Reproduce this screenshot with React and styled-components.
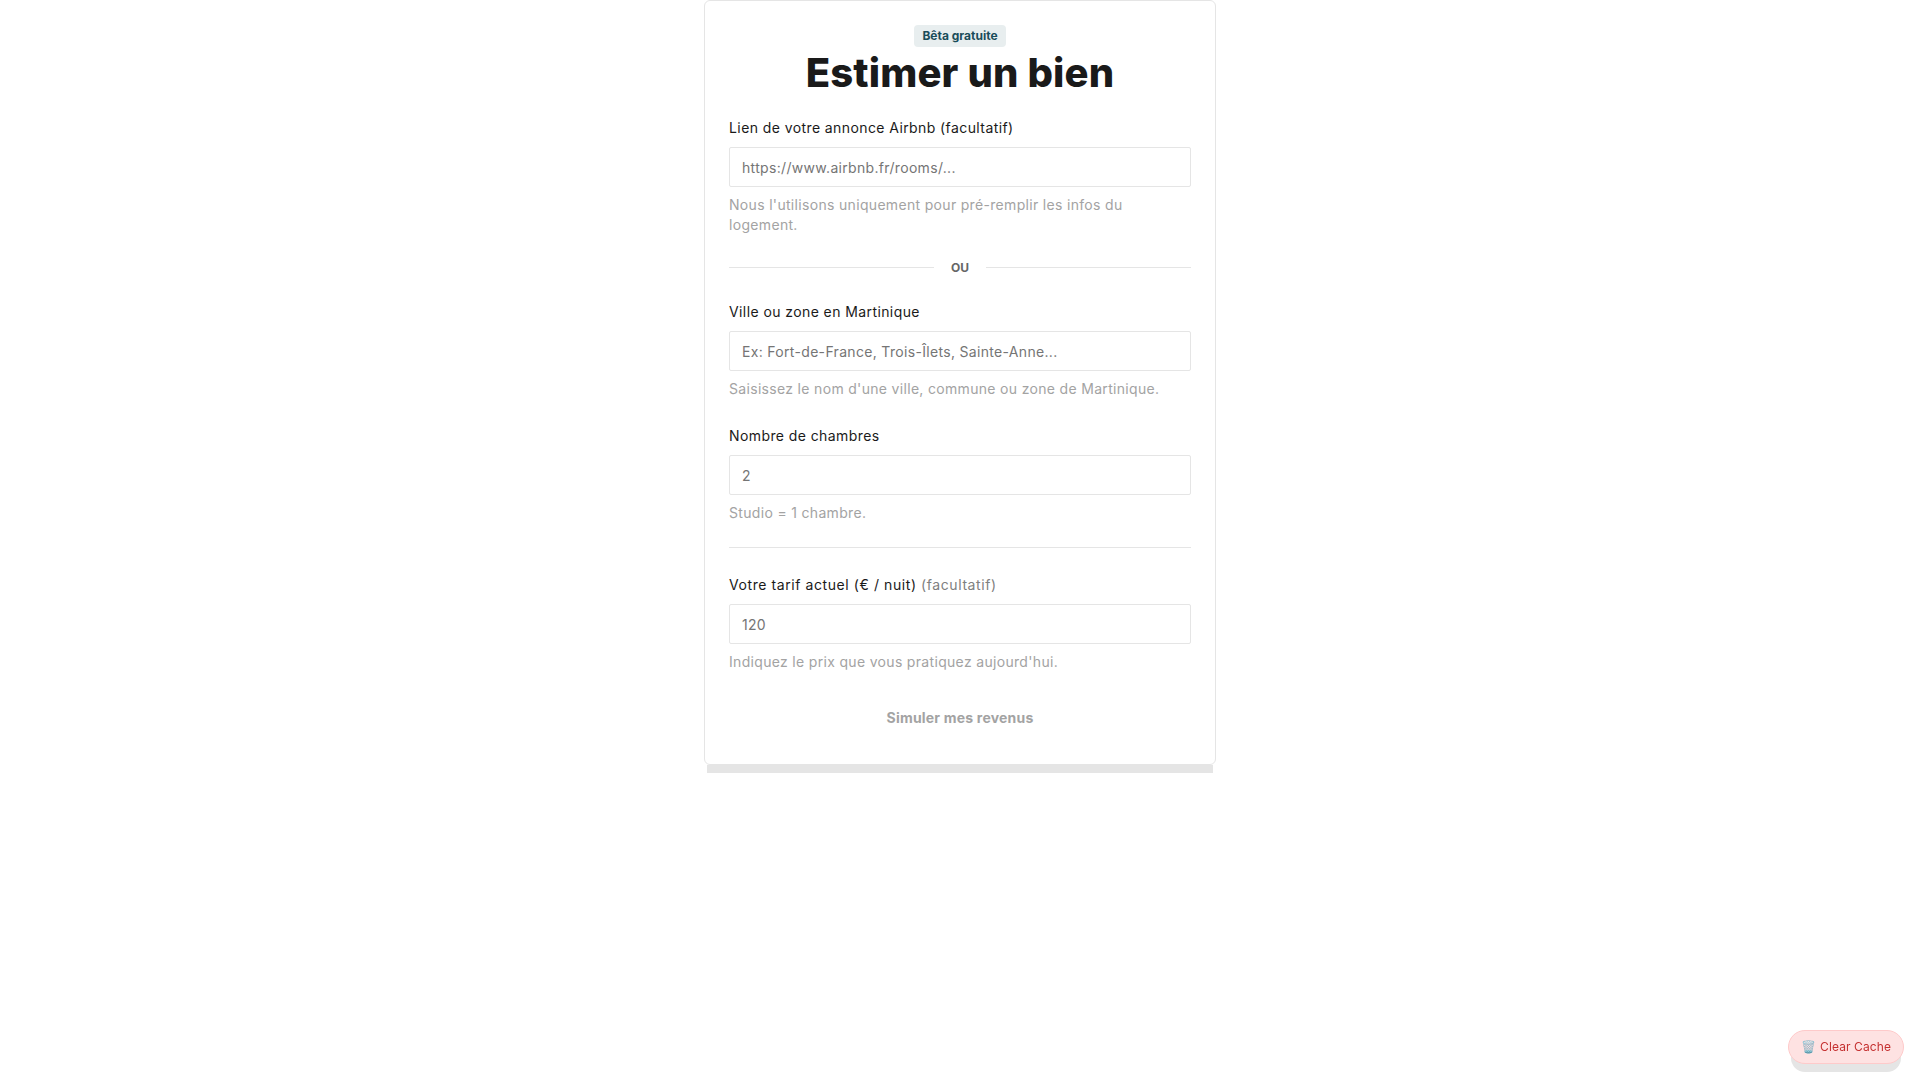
import React from "react";
import styled, { createGlobalStyle } from "styled-components";

const GlobalStyle = createGlobalStyle`
  html, body {
    margin: 0;
    padding: 0;
    background: #fff;
  }
  body {
    font-family: Inter, "Liberation Sans", sans-serif;
    color: #1a1a1a;
  }
`;

const Page = styled.div`
  min-height: 100vh;
  display: flex;
  justify-content: center;
  align-items: flex-start;
`;

const Card = styled.form`
  position: relative;
  box-sizing: border-box;
  width: 512px;
  padding: 24px;
  border: 1px solid #e5e5e5;
  border-radius: 6px;
  background: #fff;
  display: flex;
  flex-direction: column;

  &::after {
    content: "";
    position: absolute;
    left: 2px;
    right: 2px;
    bottom: -9px;
    height: 8px;
    background: #e5e5e5;
  }
`;

const Header = styled.div`
  display: flex;
  flex-direction: column;
  align-items: center;
  margin-bottom: 19px;
`;

const Badge = styled.span`
  box-sizing: border-box;
  height: 22px;
  padding: 0 8px 2px;
  display: flex;
  align-items: center;
  border-radius: 4px;
  background: #e8eeef;
  color: #1a4d5a;
  font-size: 12px;
  font-weight: 700;
`;

const Title = styled.h1`
  margin: 1px 0 0;
  font-size: 40px;
  line-height: 50px;
  font-weight: 800;
  letter-spacing: 0.15px;
  color: #1a1a1a;
`;

const Field = styled.div`
  display: flex;
  flex-direction: column;
`;

const Label = styled.label`
  font-size: 14px;
  line-height: 21px;
  font-weight: 400;
  letter-spacing: ${(p) => (p.$wide ? "0.58px" : "0.41px")};
  color: #1a1a1a;
  margin-bottom: 9px;
`;

const Muted = styled.span`
  color: #808080;
`;

const Input = styled.input`
  box-sizing: border-box;
  width: 100%;
  height: 40px;
  padding: 0 12px;
  border: 1px solid #e5e5e5;
  border-radius: 2px;
  background: #fff;
  font-family: inherit;
  font-size: 14px;
  letter-spacing: 0.32px;
  color: #757575;
  outline: none;
  &::placeholder {
    color: #757575;
    opacity: 1;
  }
`;

const Hint = styled.p`
  margin: 8px 0 0;
  font-size: 14px;
  line-height: 20px;
  letter-spacing: 0.32px;
  color: #a3a3a3;
`;

const OrRow = styled.div`
  display: flex;
  align-items: center;
  gap: 17px;
  margin: 24px 0 26px;
  height: 16px;
`;

const OrLine = styled.div`
  flex: 1;
  height: 1px;
  background: #e5e5e5;
`;

const OrText = styled.span`
  font-size: 12px;
  font-weight: 700;
  color: #666;
`;

const Rule = styled.hr`
  width: 100%;
  height: 1px;
  margin: 24px 0 26px;
  border: 0;
  background: #e5e5e5;
`;

const Spaced = styled(Field)`
  margin-top: 26px;
`;

const SubmitButton = styled.button`
  height: 44px;
  margin-top: 24px;
  padding: 0 0 1px;
  border: 0;
  background: transparent;
  font-family: inherit;
  font-size: 14px;
  font-weight: 700;
  letter-spacing: 0.2px;
  color: #a3a3a3;
`;

const ClearCache = styled.button`
  position: fixed;
  right: 16px;
  bottom: 16px;
  box-sizing: border-box;
  width: 116px;
  height: 34px;
  padding: 0 0 1px;
  display: flex;
  align-items: center;
  justify-content: center;
  gap: 4px;
  border: 1px solid #fecaca;
  border-radius: 17px;
  background: #fee2e2;
  box-shadow: 0 11px 0 -3px #e5e5e5;
  font-family: inherit;
  font-size: 12px;
  letter-spacing: 0.1px;
  color: #c53030;
`;

const App = () => (
  <>
    <GlobalStyle />
    <Page>
      <Card onSubmit={(e) => e.preventDefault()}>
        <Header>
          <Badge>Bêta gratuite</Badge>
          <Title>Estimer un bien</Title>
        </Header>

        <Field>
          <Label>Lien de votre annonce Airbnb (facultatif)</Label>
          <Input placeholder="https://www.airbnb.fr/rooms/..." />
          <Hint>Nous l'utilisons uniquement pour pré-remplir les infos du logement.</Hint>
        </Field>

        <OrRow>
          <OrLine />
          <OrText>OU</OrText>
          <OrLine />
        </OrRow>

        <Field>
          <Label>Ville ou zone en Martinique</Label>
          <Input placeholder="Ex: Fort-de-France, Trois-Îlets, Sainte-Anne..." />
          <Hint>Saisissez le nom d'une ville, commune ou zone de Martinique.</Hint>
        </Field>

        <Spaced>
          <Label>Nombre de chambres</Label>
          <Input type="number" defaultValue="2" />
          <Hint>Studio = 1 chambre.</Hint>
        </Spaced>

        <Rule />

        <Field>
          <Label $wide>
            Votre tarif actuel (€ / nuit) <Muted>(facultatif)</Muted>
          </Label>
          <Input type="number" placeholder="120" />
          <Hint>Indiquez le prix que vous pratiquez aujourd'hui.</Hint>
        </Field>

        <SubmitButton type="submit" disabled>Simuler mes revenus</SubmitButton>
      </Card>
    </Page>
    <ClearCache type="button">
      <span>🗑️</span>
      Clear Cache
    </ClearCache>
  </>
);

export default App;
